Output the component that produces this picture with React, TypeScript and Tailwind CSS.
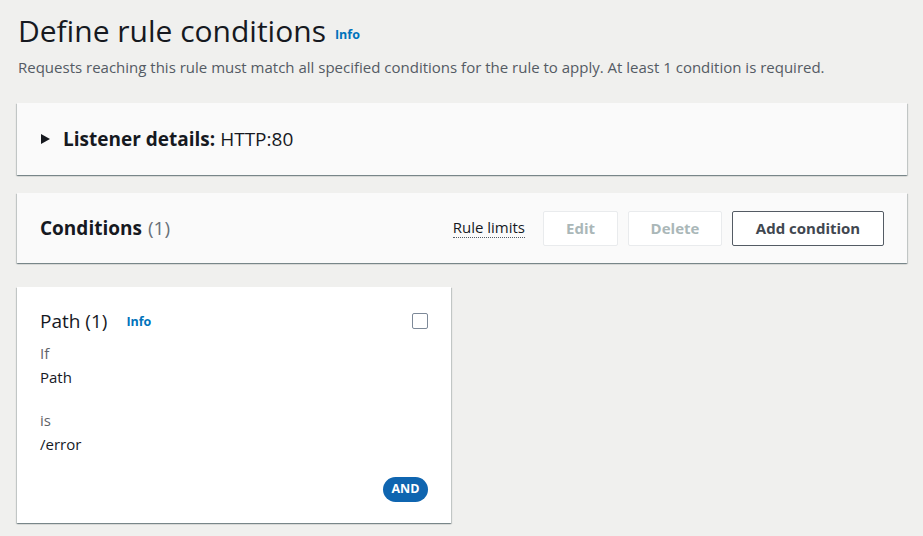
export default function App() {
  const panel =
    "bg-[#fafafa] shadow-[0_1px_1px_0_rgba(0,28,36,0.3),1px_1px_1px_0_rgba(0,28,36,0.15),-1px_1px_1px_0_rgba(0,28,36,0.15)]";
  const info = "text-[12.5px] font-bold text-[#0073bb]";

  return (
    <div className="min-h-[536px] w-[923px] bg-[#f0f0ee] px-[17px] pt-[12px] font-['Open_Sans',sans-serif] text-[#16191f]">
      <div className="flex items-end gap-[9px] pl-[1px]">
        <h1 className="text-[30px] leading-[38px]">Define rule conditions</h1>
        <span className={info + " mb-[5px]"}>Info</span>
      </div>
      <p className="mt-[7px] pl-[1px] text-[15px] leading-[20px] text-[#545b64]">
        Requests reaching this rule must match all specified conditions for the rule to apply. At least 1 condition is
        required.
      </p>

      {/* listener */}
      <div className={panel + " mt-[26px] flex h-[72px] w-[890px] items-center px-[24px]"}>
        <svg width="9" height="10" viewBox="0 0 9 10" className="mr-[13px]">
          <path d="M0 0 L9 5 L0 10 Z" fill="#16191f" />
        </svg>
        <span className="text-[19px] font-bold">Listener details:</span>
        <span className="ml-[5px] text-[19px]">HTTP:80</span>
      </div>

      {/* conditions header */}
      <div className={panel + " mt-[18px] flex h-[70px] w-[890px] items-center pl-[23px] pr-[23px]"}>
        <span className="text-[19px] font-bold">Conditions</span>
        <span className="ml-[6px] text-[19px] text-[#687078]">(1)</span>
        <div className="ml-auto flex items-center gap-[10px]">
          <span className="mr-[8px] border-b border-dotted border-[#545b64] text-[15px] leading-[19px]">Rule limits</span>
          <button className="h-[35px] w-[75px] rounded-[2px] border border-[#e9ebed] bg-white text-[15px] font-bold text-[#aab7b8]">
            Edit
          </button>
          <button className="h-[35px] w-[94px] rounded-[2px] border border-[#e9ebed] bg-white text-[15px] font-bold text-[#aab7b8]">
            Delete
          </button>
          <button className="h-[35px] w-[152px] rounded-[2px] border border-[#545b64] bg-white text-[15px] font-bold text-[#414750]">
            Add condition
          </button>
        </div>
      </div>

      {/* path card */}
      <div className="mt-[24px] flex h-[236px] w-[434px] flex-col bg-white px-[23px] pt-[20px] pb-[21px] shadow-[0_1px_1px_0_rgba(0,28,36,0.3),1px_1px_1px_0_rgba(0,28,36,0.15),-1px_1px_1px_0_rgba(0,28,36,0.15)]">
        <div className="flex items-center">
          <span className="text-[19px] leading-[28px]">Path (1)</span>
          <span className={info + " ml-[19px] mt-[2px]"}>Info</span>
          <span className="ml-auto h-[16px] w-[16px] rounded-[2px] border-[1.5px] border-[#7d8998] bg-white" />
        </div>
        <div className="mt-[6px] text-[15px] leading-[24px]">
          <div className="text-[#5f6368]">If</div>
          <div>Path</div>
          <div className="mt-[19px] text-[#5f6368]">is</div>
          <div>/error</div>
        </div>
        <div className="mt-auto flex justify-end">
          <span className="flex h-[25px] w-[45px] items-center justify-center rounded-full bg-[#0f65b0] text-[12.5px] font-bold text-white">
            AND
          </span>
        </div>
      </div>
      <div className="h-[14px]" />
    </div>
  );
}
